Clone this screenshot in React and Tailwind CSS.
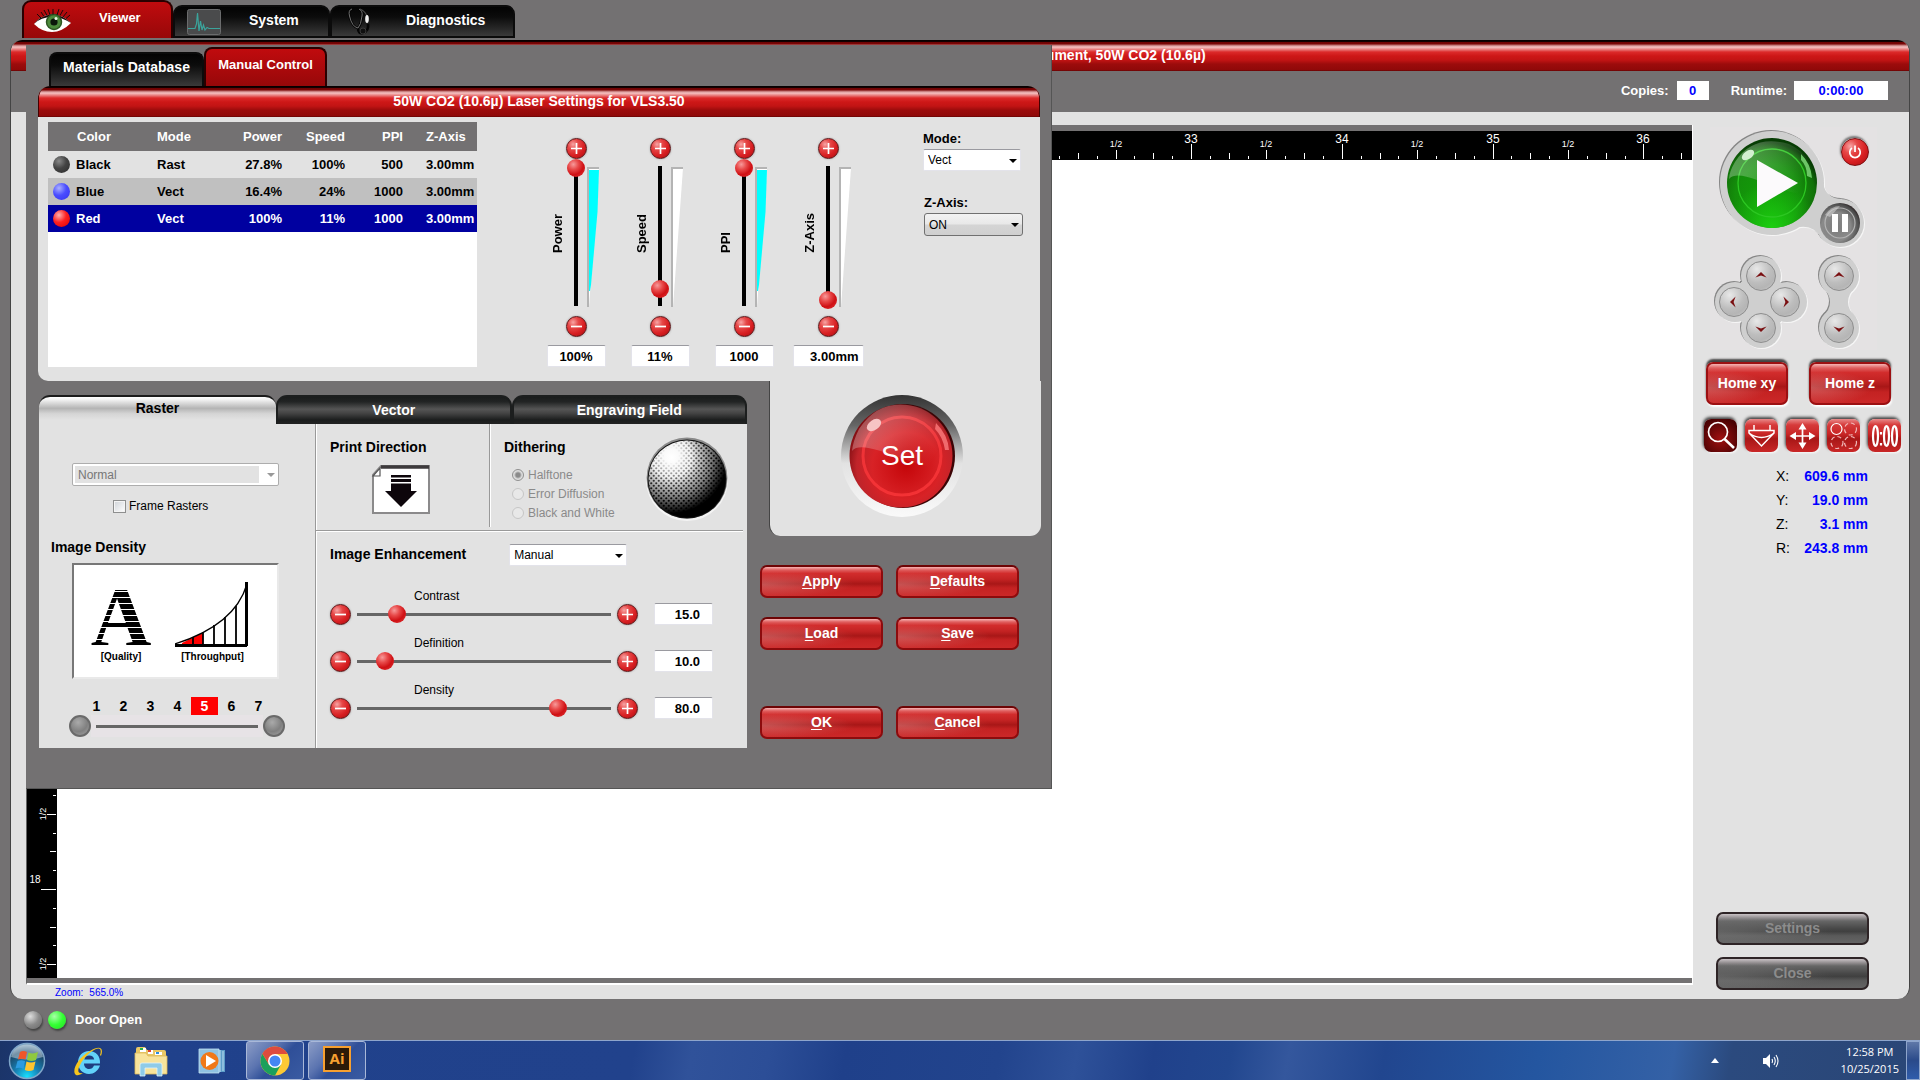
import React from "react";

const SANS = "font-['Liberation_Sans',Arial,sans-serif]";

const titleBar =
  "flex items-center justify-center text-white font-bold bg-[linear-gradient(180deg,#000_0px,#1a0000_2px,#6b0303_2px,#7c0606_4px,#b86a6a_5px,#f6c3c3_7px,#ea8a8a_9px,#dc2a2a_12px,#cd1717_16px,#c21414_20px,#9c0c0c_24px,#8f0909_30px,#5a0202_31px)]";

const glossRed =
  "bg-[radial-gradient(ellipse_at_0%_60%,rgba(225,140,140,0.5),transparent_55%),linear-gradient(180deg,#f6b4b4_0%,#e06060_10%,#d22c2c_22%,#c32323_42%,#a81717_58%,#c42222_72%,#cb2828_100%)]";

const glossGray =
  "bg-[radial-gradient(ellipse_at_0%_60%,rgba(150,150,150,0.4),transparent_55%),linear-gradient(180deg,#c9c2c5_0%,#8f8b8d_14%,#666_24%,#484848_50%,#404040_60%,#5a5a5a_75%,#646464_100%)]";

const ballRed = "bg-[radial-gradient(circle_at_32%_28%,#f7a5a5_0%,#e64848_28%,#d81f22_60%,#a50d10_100%)]";

const thumb =
  "[&::-webkit-slider-thumb]:appearance-none [&::-webkit-slider-thumb]:size-[18px] [&::-webkit-slider-thumb]:rounded-full [&::-webkit-slider-thumb]:bg-[radial-gradient(circle_at_35%_30%,#f79a9a_0%,#e84a4a_30%,#cf1014_60%,#e23c3c_100%)]";

function MainTab({ label, icon, active, className }) {
  return (
    <button
      className={
        active
          ? `flex h-[38px] items-center rounded-t-[9px] border-2 border-b-0 border-[#2a0000] bg-[linear-gradient(180deg,#c00b0e,#970809)] pb-[4px] text-[13px] font-bold text-white ${className}`
          : `mt-[5px] flex h-[33px] items-center rounded-t-[9px] border-2 border-[#0b0b0b] bg-[linear-gradient(180deg,#030303_0%,#0c0c0c_35%,#3a3a3a_100%)] pb-[2px] text-[14px] font-bold text-white ${className}`
      }
    >
      {icon}
      {label}
    </button>
  );
}

function EyeIcon() {
  return (
    <svg width="40" height="26" viewBox="0 0 40 26" className="mt-[5px] mr-[27px] ml-[8px]" aria-hidden="true">
      <path d="M2 16 Q8 8 20 6 Q31 7 39 15 Q30 24 20 24 Q10 24 2 16Z" fill="#fff" />
      <path d="M2 16 Q8 8 20 6 Q31 7 39 15 Q30 9 20 9 Q9 9 2 16Z" fill="#1b0a0a" />
      <circle cx="22" cy="14" r="7.500" fill="#4c8a3b" />
      <circle cx="22" cy="14" r="7.500" fill="none" stroke="#2e5723" strokeWidth="1.5" />
      <circle cx="22" cy="14" r="3.6" fill="#0b160a" />
      <circle cx="24" cy="10.5" r="1.5" fill="#e9f5e4" />
      <path d="M9 10 5 6M12 8.5 9 4M15 7.5 12 2M18 7 16 1M21 6.5 21 1M25 7 27 1M28 7.5 31 2M31 9 35 4M34 10.5 38 7" stroke="#1b0a0a" strokeWidth="1" />
    </svg>
  );
}

function PulseIcon() {
  return (
    <svg width="34" height="26" viewBox="0 0 34 26" className="mt-[2px] mr-[28px] ml-[12px]" aria-hidden="true">
      <rect x="0.5" y="0.5" width="33" height="25" rx="2" fill="#4a4b4c" stroke="#6b6c6d" />
      <path d="M1 19.500H8L9.500 15 10.500 4 12 22 13.500 12 15 21 16.500 16 18 21 20 18.500 22 19.500H33" fill="none" stroke="#3ba39b" strokeWidth="1.2" />
    </svg>
  );
}

function StethoscopeIcon() {
  return (
    <svg width="24" height="28" viewBox="0 0 24 28" className="mr-[35px] ml-[15px]" aria-hidden="true">
      <path d="M5 2 Q1 3 2.500 9 Q5 20 11 21 Q14 18 15 9 Q16 4 12 2 M11 21 Q11 27 16 26 Q22 24 21 17" fill="none" stroke="#050505" strokeWidth="2.6" />
      <path d="M5 2 Q1 3 2.500 9 Q5 20 11 21 Q14 18 15 9 Q16 4 12 2" fill="none" stroke="#707070" strokeWidth="1" />
      <path d="M13 2 Q18 4 20 9" fill="none" stroke="#4a4a4a" strokeWidth="1.2" />
      <ellipse cx="20" cy="12" rx="1.8" ry="4" fill="#f0f0f0" />
      <circle cx="16" cy="24" r="3" fill="#101010" stroke="#3a3a3a" />
    </svg>
  );
}

function RoundButton({ sign, label }) {
  return (
    <button
      aria-label={label}
      className={`flex size-[21px] shrink-0 items-center justify-center rounded-full border border-[#5c1416] shadow-[0_0_2px_#999] ${ballRed}`}
    >
      <svg width="11" height="11" viewBox="0 0 11 11" aria-hidden="true">
        <path d={sign === "+" ? "M0 5.500H11M5.500 0V11" : "M0 5.500H11"} stroke="#fff" strokeWidth="1.700" />
      </svg>
    </button>
  );
}

const rows = [
  { name: "Black", mode: "Rast", power: "27.8%", speed: "100%", ppi: "500", z: "3.00mm", row: "bg-[#e2e2e2]", ball: "bg-[radial-gradient(circle_at_35%_30%,#888,#444_45%,#2b2b2b)]" },
  { name: "Blue", mode: "Vect", power: "16.4%", speed: "24%", ppi: "1000", z: "3.00mm", row: "bg-[#c0c0c0]", ball: "bg-[radial-gradient(circle_at_35%_30%,#aab0ff,#4a4dff_45%,#3333ee)]" },
  { name: "Red", mode: "Vect", power: "100%", speed: "11%", ppi: "1000", z: "3.00mm", row: "bg-[#0000a0] text-white", ball: "bg-[radial-gradient(circle_at_35%_30%,#ffb0b0,#ff2020_45%,#dd0000)]" },
];

function SettingsTable() {
  return (
    <div className="mt-[5px] ml-[10px] h-[245px] w-[429px] bg-white">
      <table className="w-full table-fixed border-collapse text-left text-[13px] leading-[16px] font-bold">
        <colgroup>
          <col className="w-[109px]" />
          <col className="w-[60px]" />
          <col className="w-[65px]" />
          <col className="w-[63px]" />
          <col className="w-[58px]" />
          <col className="w-[74px]" />
        </colgroup>
        <thead>
          <tr className="h-[29px] bg-[#737172] text-white">
            <th className="p-0 pl-[29px]">Color</th>
            <th className="p-0">Mode</th>
            <th className="p-0 text-right">Power</th>
            <th className="p-0 text-right">Speed</th>
            <th className="p-0 text-right">PPI</th>
            <th className="p-0 pl-[23px]">Z-Axis</th>
          </tr>
        </thead>
        <tbody>
          {rows.map((r) => (
            <tr key={r.name} className={`h-[27px] ${r.row}`}>
              <td className="p-0">
                <div className="flex items-center gap-[6px] pl-[5px]">
                  <span className={`size-[17px] rounded-full ${r.ball}`} />
                  {r.name}
                </div>
              </td>
              <td className="p-0">{r.mode}</td>
              <td className="p-0 text-right">{r.power}</td>
              <td className="p-0 text-right">{r.speed}</td>
              <td className="p-0 text-right">{r.ppi}</td>
              <td className="p-0 pl-[23px] whitespace-nowrap">{r.z}</td>
            </tr>
          ))}
        </tbody>
      </table>
    </div>
  );
}

function Wedge({ filled }) {
  return (
    <svg width="14" height="140" viewBox="0 0 14 140" className="mt-[8px] ml-[2px] self-start" aria-hidden="true">
      <path d="M1 1H12L2 140H1Z" fill="#fff" />
      <path d="M1 140V1H12" fill="none" stroke="#b4b4b4" strokeWidth="2" />
      {filled && <path d="M2 3H12L10.500 45 4 118 3 124H2Z" fill="#00ffff" />}
    </svg>
  );
}

function VerticalSlider({ label, value, pos, filled, wide }) {
  const id = `v-${label}`;
  return (
    <div className="flex w-[58px] flex-col items-center">
      <RoundButton sign="+" label={`Increase ${label}`} />
      <div className="grid h-[154px] w-full grid-cols-[20px_18px_20px]">
        <label htmlFor={id} className="mb-[60px] ml-[3px] rotate-180 self-end text-[13px] leading-[16px] font-bold [writing-mode:vertical-rl]">
          {label}
        </label>
        <input
          id={id}
          type="range"
          defaultValue={pos}
          className={`h-[154px] w-[18px] appearance-none bg-transparent bg-[linear-gradient(#000,#000)] bg-[length:4px_140px] bg-center bg-no-repeat [direction:rtl] [writing-mode:vertical-lr] ${thumb}`}
        />
        <Wedge filled={filled} />
      </div>
      <div className="mt-[3px]">
        <RoundButton sign="-" label={`Decrease ${label}`} />
      </div>
      <input
        aria-label={`${label} value`}
        defaultValue={value}
        className={`mt-[8px] h-[22px] rounded-[2px] border border-[#e3e3ea] border-t-[#9a9aa0] bg-white text-[13px] font-bold ${wide ? "w-[71px] pr-[4px] text-right" : "w-[59px] text-center"}`}
      />
    </div>
  );
}

function Select({ id, label, options, className, arrow, disabled }) {
  return (
    <div className="relative w-fit">
      <select id={id} aria-label={label} disabled={disabled} className={`block appearance-none text-[12px] ${className}`}>
        {options.map((o) => (
          <option key={o}>{o}</option>
        ))}
      </select>
      <svg width="8" height="4" viewBox="0 0 8 4" className={`pointer-events-none absolute top-[10px] right-[4px] ${arrow}`} aria-hidden="true">
        <path d="M0 0H8L4 4Z" fill="currentColor" />
      </svg>
    </div>
  );
}

function BlackTab({ label }) {
  return (
    <button className="flex-1 rounded-t-[11px] border-2 border-b-0 border-[#1c1e1e] bg-[linear-gradient(180deg,#1a1c1c_0%,#222424_18%,#555_45%,#444_60%,#1b1d1d_85%,#222_100%)] pb-[1px] text-[14px] font-bold text-white">
      {label}
    </button>
  );
}

function PreviewPicture() {
  return (
    <div className="mt-[6px] ml-[33px] flex h-[116px] w-[207px] items-start gap-[6px] border-2 border-[#e9e9e9] border-t-[#777] border-l-[#777] bg-white pl-[17px] text-center text-[10px] leading-[12px] font-bold">
      <figure className="mt-[19px] w-[60px]">
        <svg width="60" height="66" viewBox="0 0 60 66" className="overflow-visible" aria-hidden="true">
          <defs>
            <pattern id="stripes" width="60" height="6" y="2" patternUnits="userSpaceOnUse">
              <rect width="60" height="5" fill="#000" />
            </pattern>
          </defs>
          <text x="30" y="62" textAnchor="middle" fontSize="84" fontWeight="bold" fontFamily="'Liberation Serif', serif" fill="url(#stripes)">A</text>
        </svg>
        <figcaption className="mt-[1px]">[Quality]</figcaption>
      </figure>
      <figure className="mt-[15px] ml-[18px] w-[75px]">
        <svg width="75" height="68" viewBox="0 0 75 68" aria-hidden="true">
          <path d="M7 63 17 58 28 53V64H7Z" fill="#f00" />
          <path d="M0 64Q60 45 72 4" fill="none" stroke="#000" strokeWidth="1.300" />
          <path d="M18 57V64M28 52V64M39 45V64M50 37V64M61 26V64" stroke="#000" strokeWidth="1.800" />
          <path d="M0 65.500H72" stroke="#000" strokeWidth="3" />
          <path d="M71.500 2V66" stroke="#000" strokeWidth="3" />
        </svg>
        <figcaption className="mt-[3px]">[Throughput]</figcaption>
      </figure>
    </div>
  );
}

function DitherSphere() {
  return (
    <svg width="84" height="84" viewBox="0 0 84 84" aria-hidden="true">
      <defs>
        <radialGradient id="sph" cx="0.3" cy="0.22" r="0.85">
          <stop offset="0" stopColor="#fff" />
          <stop offset="0.3" stopColor="#f2f2f2" />
          <stop offset="0.62" stopColor="#777" />
          <stop offset="0.85" stopColor="#000" />
        </radialGradient>
        <radialGradient id="dotfade" cx="0.3" cy="0.2" r="0.9">
          <stop offset="0.1" stopColor="#fff" stopOpacity="0" />
          <stop offset="0.4" stopColor="#fff" stopOpacity="0.700" />
          <stop offset="0.7" stopColor="#fff" stopOpacity="1" />
        </radialGradient>
        <pattern id="dots" width="5" height="5" patternUnits="userSpaceOnUse">
          <circle cx="1.250" cy="1.250" r="1.100" fill="#000" />
          <circle cx="3.750" cy="3.750" r="1.100" fill="#000" />
        </pattern>
        <mask id="dm">
          <circle cx="42" cy="42" r="39" fill="url(#dotfade)" />
        </mask>
      </defs>
      <circle cx="42" cy="43" r="41" fill="#f4f4f4" />
      <circle cx="42" cy="41" r="40.500" fill="#8a8a8a" />
      <circle cx="42" cy="42" r="39.500" fill="#111" />
      <circle cx="42" cy="42" r="38.500" fill="url(#sph)" />
      <circle cx="42" cy="42" r="38.500" fill="url(#dots)" mask="url(#dm)" />
    </svg>
  );
}

function PageDownIcon() {
  return (
    <svg width="60" height="50" viewBox="0 0 60 50" aria-hidden="true">
      <path d="M10 1H58V48H2V10Z" fill="#fff" stroke="#8b8a8b" strokeWidth="2" />
      <path d="M10 2H58" stroke="#3d3a3c" strokeWidth="3.500" />
      <path d="M2 11 9 3V11Z" fill="#fff" stroke="#555" strokeWidth="1.200" />
      <path d="M20 10H40V12.500H20ZM20 14H40V17H20ZM20 18.500H40V26H46L30 42 14 26H20Z" fill="#0d060b" />
    </svg>
  );
}

function HorizontalSlider({ label, value, pos }) {
  const id = `h-${label}`;
  return (
    <div className="flex h-[47px] flex-col">
      <label htmlFor={id} className="ml-[84px] text-[12px] leading-[16px]">
        {label}
      </label>
      <div className="flex h-[20px] items-center">
        <RoundButton sign="-" label={`Decrease ${label}`} />
        <input
          id={id}
          type="range"
          defaultValue={pos}
          className={`h-[18px] w-[266px] appearance-none bg-transparent bg-[linear-gradient(#666,#666)] bg-[length:254px_3px] bg-center bg-no-repeat ${thumb}`}
        />
        <RoundButton sign="+" label={`Increase ${label}`} />
        <input
          aria-label={`${label} value`}
          defaultValue={value}
          className="ml-[16px] h-[22px] w-[59px] rounded-[2px] border border-[#e3e3ea] border-t-[#9a9aa0] bg-white pr-[12px] text-right text-[13px] font-bold"
        />
      </div>
    </div>
  );
}

function RasterPanel() {
  return (
    <section className="mt-[14px] w-[708px]">
      <div className="flex h-[29px]">
        <button className="w-[237px] rounded-t-[11px] border-t-2 border-[#1b1b1b] bg-[linear-gradient(180deg,#fff_0%,#f2f2f2_10%,#b4b4b4_42%,#d5d5d5_62%,#e2e2e2_85%)] pb-[5px] text-[14px] font-bold">
          Raster
        </button>
        <BlackTab label="Vector" />
        <BlackTab label="Engraving Field" />
      </div>
      <div className="grid grid-cols-[276px_1fr] bg-[#e2e2e2]">
        <div className="h-[324px]">
          <div className="mt-[39px] ml-[33px]">
            <Select
              id="raster-mode"
              label="Raster mode"
              disabled
              options={["Normal"]}
              arrow="text-[#999]"
              className="h-[23px] w-[207px] rounded-[2px] border border-[#adadad] bg-white bg-[linear-gradient(#e2e2e2,#e2e2e2)] bg-[length:184px_17px] bg-[position:2px_2px] bg-no-repeat pl-[5px] text-[#777] opacity-100"
            />
          </div>
          <label className="mt-[12px] ml-[74px] flex items-center gap-[3px] text-[12px] leading-[16px]">
            <input type="checkbox" className="size-[13px] appearance-none border border-[#8e8f8f] bg-[linear-gradient(135deg,#cfd3d8,#fff)] shadow-[inset_0_0_0_1px_#f4f4f4]" />
            Frame Rasters
          </label>
          <h3 className="mt-[23px] ml-[12px] text-[14px] leading-[20px] font-bold">Image Density</h3>
          <PreviewPicture />
          <div className="mt-[18px] ml-[44px] grid w-[189px] grid-cols-7 text-center text-[14px] leading-[18px] font-bold">
            {[1, 2, 3, 4, 5, 6, 7].map((n) => (
              <span key={n} className={n === 5 ? "bg-[#f00] text-white" : ""}>
                {n}
              </span>
            ))}
          </div>
          <div className="ml-[30px] flex items-center">
            <button aria-label="Lower density" className="size-[22px] rounded-full border-2 border-[#6a6a6a] bg-[radial-gradient(circle_at_40%_30%,#aaa,#808080_55%,#a5a5a5)]" />
            <input
              type="range"
              aria-label="Image Density"
              min="1"
              max="7"
              defaultValue="5"
              className="h-[22px] w-[172px] appearance-none bg-[#e7e3e6] bg-[linear-gradient(#666,#666)] bg-[length:162px_3px] bg-center bg-no-repeat [&::-webkit-slider-thumb]:size-[1px] [&::-webkit-slider-thumb]:appearance-none"
            />
            <button aria-label="Raise density" className="size-[22px] rounded-full border-2 border-[#6a6a6a] bg-[radial-gradient(circle_at_40%_30%,#aaa,#808080_55%,#a5a5a5)]" />
          </div>
        </div>
        <div className="border-l border-[#999] shadow-[inset_1px_0_0_#fff]">
          <div className="mr-[4px] flex h-[107px] border-b border-[#999] shadow-[0_1px_0_#fff]">
            <div className="mb-[3px] w-[174px] border-r border-[#999] pt-[13px] pl-[14px] shadow-[1px_0_0_#fff]">
              <h3 className="text-[14px] leading-[20px] font-bold">Print Direction</h3>
              <button aria-label="Print direction down" className="mt-[8px] ml-[41px] block">
                <PageDownIcon />
              </button>
            </div>
            <div className="flex flex-1 justify-between pt-[13px] pl-[14px]">
              <fieldset disabled className="text-[12px] leading-[18px] text-[#8a8a8a]">
                <legend className="mb-[8px] text-[14px] leading-[20px] font-bold text-black">Dithering</legend>
                {["Halftone", "Error Diffusion", "Black and White"].map((d, i) => (
                  <label key={d} className="ml-[8px] flex h-[19px] items-center gap-[4px]">
                    <input
                      type="radio"
                      name="dither"
                      defaultChecked={i === 0}
                      className="size-[12px] appearance-none rounded-full border border-[#c6c6c6] bg-[#e8e8e8] checked:border-[#8f8f8f] checked:bg-[radial-gradient(circle,#8a8a8a_0_2px,#ddd_4px)]"
                    />
                    {d}
                  </label>
                ))}
              </fieldset>
              <div className="mr-[14px]">
                <DitherSphere />
              </div>
            </div>
          </div>
          <div className="pt-[13px] pl-[14px]">
            <div className="flex gap-[43px]">
              <label htmlFor="enh" className="text-[14px] leading-[20px] font-bold">
                Image Enhancement
              </label>
              <Select
                id="enh"
                options={["Manual"]}
                arrow="text-black"
                className="h-[22px] w-[118px] rounded-[2px] border border-[#e3e3ea] border-t-[#9a9aa0] bg-white pl-[4px]"
              />
            </div>
            <div className="mt-[22px]">
              <HorizontalSlider label="Contrast" value="15.0" pos={15} />
              <HorizontalSlider label="Definition" value="10.0" pos={10} />
              <HorizontalSlider label="Density" value="80.0" pos={80} />
            </div>
          </div>
        </div>
      </div>
    </section>
  );
}

function DialogButton({ label }) {
  return (
    <button className={`h-[33px] rounded-[7px] border-2 border-[#8c0b0d] border-t-[#6d0405] text-[14px] font-bold text-white ${glossRed}`}>
      <u className="underline underline-offset-2">{label[0]}</u>
      {label.slice(1)}
    </button>
  );
}

function SetButton() {
  return (
    <button className="relative mt-[14px] ml-[71px] block size-[122px]">
      <svg width="122" height="122" viewBox="0 0 122 122" className="block" aria-hidden="true">
        <defs>
          <linearGradient id="ring" x1="0" y1="0" x2="0" y2="1">
            <stop offset="0" stopColor="#333" />
            <stop offset="0.25" stopColor="#666" />
            <stop offset="0.5" stopColor="#ccc" />
            <stop offset="0.56" stopColor="#e2e2e2" />
            <stop offset="1" stopColor="#fafafa" />
          </linearGradient>
          <radialGradient id="setg" cx="0.55" cy="0.6" r="0.6">
            <stop offset="0" stopColor="#c5060a" />
            <stop offset="0.55" stopColor="#d82226" />
            <stop offset="0.8" stopColor="#c0242a" />
            <stop offset="1" stopColor="#7c0c10" />
          </radialGradient>
          <linearGradient id="gl" x1="0" y1="0" x2="1" y2="0.4">
            <stop offset="0" stopColor="#fff" stopOpacity="0.350" />
            <stop offset="1" stopColor="#fff" stopOpacity="0" />
          </linearGradient>
        </defs>
        <circle cx="61" cy="61" r="61" fill="url(#ring)" />
        <circle cx="62" cy="61" r="52" fill="#3c0405" />
        <circle cx="60" cy="61" r="51.500" fill="url(#setg)" />
        <circle cx="61" cy="61" r="39" fill="none" stroke="#ff3a3d" strokeOpacity="0.700" strokeWidth="3" />
        <path d="M11 56C22 42 70 72 108 76Q114 28 80 13Q40 0 18 34Q12 46 11 56Z" fill="url(#gl)" />
        <ellipse cx="33" cy="30" rx="8" ry="5" transform="rotate(-35 33 30)" fill="#f6c4c4" />
        <path d="M95 28Q107 40 108 55L104 55Q102 42 94 34Z" fill="#f06a6c" />
      </svg>
      <span className="absolute inset-0 flex items-center justify-center text-[28px] text-white">Set</span>
    </button>
  );
}

function LaserDialog() {
  return (
    <section role="dialog" aria-label="Laser settings" className="absolute top-[45px] left-[26px] w-[1026px] border-r border-b border-[#555] bg-[#737172] pb-[40px]">
      <div className="flex h-[41px] items-end pl-[23px] font-bold text-white">
        <button className="h-[34px] w-[155px] rounded-t-[8px] border-2 border-b-0 border-[#0b0b0b] bg-[linear-gradient(180deg,#030303_0%,#0c0c0c_35%,#3a3a3a_100%)] pb-[6px] text-[14px]">
          Materials Database
        </button>
        <button className="h-[39px] w-[123px] rounded-t-[8px] border-2 border-b-0 border-[#2a0000] bg-[linear-gradient(180deg,#c00b0e,#970809)] pb-[6px] text-[13px]">
          Manual Control
        </button>
      </div>
      <div className="mr-[11px] ml-[12px] rounded-t-[12px] rounded-bl-[10px] bg-[#e2e2e2]">
        <h2 className={`h-[31px] rounded-t-[12px] border-x border-[#400] text-[14px] ${titleBar}`}>50W CO2 (10.6µ) Laser Settings for VLS3.50</h2>
        <div className="flex h-[264px]">
          <SettingsTable />
          <div className="mt-[21px] ml-[70px] flex gap-[26px]">
            <VerticalSlider label="Power" value="100%" pos={100} filled />
            <VerticalSlider label="Speed" value="11%" pos={11} />
            <VerticalSlider label="PPI" value="1000" pos={100} filled />
            <VerticalSlider label="Z-Axis" value="3.00mm" pos={3} wide />
          </div>
          <div className="mt-[12px] ml-[66px]">
            <label htmlFor="mode" className="block text-[13px] leading-[20px] font-bold">
              Mode:
            </label>
            <Select
              id="mode"
              options={["Vect"]}
              arrow="text-black"
              className="h-[22px] w-[98px] rounded-[2px] border border-[#e3e3ea] border-t-[#9a9aa0] bg-white pl-[4px]"
            />
            <label htmlFor="zaxis" className="mt-[22px] ml-[1px] block text-[13px] leading-[20px] font-bold">
              Z-Axis:
            </label>
            <div className="ml-[1px]">
              <Select
                id="zaxis"
                options={["ON"]}
                arrow="text-black"
                className="h-[23px] w-[99px] rounded-[3px] border border-[#707070] bg-[linear-gradient(180deg,#f2f2f2_0%,#e8e8e8_48%,#d4d4d4_52%,#cfcfcf_100%)] pl-[4px]"
              />
            </div>
          </div>
        </div>
      </div>
      <div className="flex pl-[13px]">
        <RasterPanel />
        <div className="ml-[13px]">
          <div className="ml-[9px] h-[155px] w-[272px] overflow-hidden rounded-b-[11px] border-l border-[#444] bg-[#e2e2e2]">
            <SetButton />
          </div>
          <div className="mt-[29px] grid w-[259px] grid-cols-2 gap-x-[13px] gap-y-[19px]">
            <DialogButton label="Apply" />
            <DialogButton label="Defaults" />
            <DialogButton label="Load" />
            <DialogButton label="Save" />
          </div>
          <div className="mt-[56px] grid w-[259px] grid-cols-2 gap-x-[13px]">
            <DialogButton label="OK" />
            <DialogButton label="Cancel" />
          </div>
        </div>
      </div>
    </section>
  );
}

const tickLen = (i) => (i % 8 === 0 ? 15 : i % 4 === 0 ? 9 : i % 2 === 0 ? 6 : 3);
const hTicks = Array.from({ length: 160 }, (_, k) => k + 208);
const vTicks = Array.from({ length: 44 }, (_, k) => k + 108);

function TopRuler() {
  return (
    <svg height="29" className={`block w-full bg-black ${SANS}`} aria-hidden="true">
      {hTicks.map((i) => {
        const x = Math.round(1164 + (i - 264) * 18.85);
        return (
          <g key={i}>
            <rect x={x} y={28 - tickLen(i)} width="1" height={tickLen(i)} fill="#fff" />
            {i % 8 === 0 && <text x={x} y="12" fontSize="12" fill="#fff" textAnchor="middle">{i / 8}</text>}
            {i % 8 === 4 && <text x={x} y="16" fontSize="9" fill="#fff" textAnchor="middle">1/2</text>}
          </g>
        );
      })}
    </svg>
  );
}

function SideRuler() {
  return (
    <svg width="30" className={`block h-full bg-black ${SANS}`} aria-hidden="true">
      {vTicks.map((i) => {
        const y = Math.round(729 + (i - 144) * 18.8);
        return (
          <g key={i}>
            <rect x={29 - tickLen(i)} y={y} width={tickLen(i)} height="1" fill="#fff" />
            {i % 8 === 0 && <text x="8" y={y - 6} fontSize="10" fill="#fff" textAnchor="middle">{i / 8}</text>}
            {i % 8 === 4 && <text x="19" y={y} transform={`rotate(-90 19 ${y})`} fontSize="9" fill="#fff" textAnchor="middle">1/2</text>}
          </g>
        );
      })}
    </svg>
  );
}

function Workspace() {
  return (
    <div className="flex min-w-0 flex-1 flex-col pt-[13px] pl-[15px]">
      <div className="flex flex-1 flex-col border-r border-b-2 border-l border-white border-l-[#666] bg-[#737172] pt-[6px] pb-[5px]">
        <TopRuler />
        <div className="flex flex-1 bg-white">
          <div className="w-[30px] border-r border-[#777]">
            <SideRuler />
          </div>
        </div>
      </div>
      <p className="flex h-[14px] items-center gap-[6px] pl-[29px] text-[10px] text-[#00f]">
        <span>Zoom:</span>
        <span>565.0%</span>
      </p>
    </div>
  );
}

const arrowPaths = {
  up: "M3 12 10 5 17 12 10 9.500Z",
  down: "M3 8 10 15 17 8 10 10.500Z",
  left: "M12 3 5 10 12 17 9.500 10Z",
  right: "M8 3 15 10 8 17 10.500 10Z",
};

function JogButton({ dir, label, className }) {
  return (
    <button
      aria-label={label}
      className={`absolute flex size-[30px] items-center justify-center rounded-full border border-[#8d8d8d] bg-[radial-gradient(circle_at_35%_25%,#e8e8e8,#bdbdbd_50%,#b5b5b5_70%,#cfcfcf)] ${className}`}
    >
      <svg width="16" height="16" viewBox="0 0 20 20" aria-hidden="true">
        <path d={arrowPaths[dir]} fill="#7a1012" />
      </svg>
    </button>
  );
}

function HousingShapes() {
  return (
    <>
      <circle cx="62" cy="56" r="52" />
      <circle cx="130" cy="96" r="24" />
      <path d="M107 30 113 56Q116 72 132 72L112 112Q104 98 90 100L70 80Z" />
      <circle cx="51" cy="149" r="20" />
      <circle cx="25" cy="175" r="20" />
      <circle cx="77" cy="175" r="20" />
      <circle cx="51" cy="201" r="20" />
      <rect x="31" y="155" width="40" height="40" />
      <circle cx="129" cy="149" r="20" />
      <circle cx="129" cy="201" r="20" />
      <path d="M112 159Q128 175 112 191H146Q130 175 146 159Z" />
    </>
  );
}

function ControlCluster() {
  return (
    <div className="relative mt-[15px] ml-[17px] h-[223px] w-[167px] bg-[#e4e2e3]">
      <svg width="172" height="226" viewBox="0 0 172 226" className="block" aria-hidden="true">
        <g fill="#858585" transform="translate(-1 -1)"><HousingShapes /></g>
        <g fill="#f6f6f6" transform="translate(1 1)"><HousingShapes /></g>
        <g fill="#cfcfcf"><HousingShapes /></g>
      </svg>
      <button aria-label="Start" className="absolute top-[11px] left-[17px] size-[90px]">
        <svg width="90" height="90" viewBox="0 0 90 90" aria-hidden="true">
          <defs>
            <radialGradient id="gg" cx="0.45" cy="0.65" r="0.6">
              <stop offset="0" stopColor="#12a008" />
              <stop offset="0.6" stopColor="#148f0b" />
              <stop offset="0.88" stopColor="#117009" />
              <stop offset="1" stopColor="#073d04" />
            </radialGradient>
            <radialGradient id="gb" cx="0.5" cy="1" r="0.5">
              <stop offset="0" stopColor="#1cd010" />
              <stop offset="1" stopColor="#1cd010" stopOpacity="0" />
            </radialGradient>
            <linearGradient id="gw" x1="0" y1="0" x2="1" y2="0.3">
              <stop offset="0" stopColor="#fff" stopOpacity="0.350" />
              <stop offset="1" stopColor="#fff" stopOpacity="0" />
            </linearGradient>
          </defs>
          <circle cx="45" cy="45" r="45" fill="url(#gg)" />
          <circle cx="45" cy="45" r="45" fill="url(#gb)" />
          <circle cx="45" cy="45" r="34" fill="none" stroke="#2cc722" strokeWidth="1.300" />
          <path d="M2 41C14 28 50 56 88 58Q92 20 62 6Q26 -4 8 24Q2 34 2 41Z" fill="url(#gw)" />
          <ellipse cx="21" cy="17" rx="7" ry="4" transform="rotate(-35 21 17)" fill="#d3efd0" />
          <path d="M74 16Q84 26 85 40L80 38Q80 28 74 22Z" fill="#6cc566" />
          <path d="M30 22 71 45 30 69Z" fill="#fcfafc" />
        </svg>
      </button>
      <button aria-label="Pause" className="absolute top-[76px] left-[110px] size-[40px]">
        <svg width="40" height="40" viewBox="0 0 40 40" aria-hidden="true">
          <defs>
            <radialGradient id="pg" cx="0.4" cy="0.6" r="0.65">
              <stop offset="0" stopColor="#7c7c7c" />
              <stop offset="0.55" stopColor="#8a8a8a" />
              <stop offset="0.9" stopColor="#4a4a4a" />
              <stop offset="1" stopColor="#2c2022" />
            </radialGradient>
          </defs>
          <circle cx="20" cy="20" r="20" fill="url(#pg)" />
          <circle cx="20" cy="20" r="15" fill="none" stroke="#b4b4b4" strokeWidth="1.200" />
          <path d="M5 12Q11 3 20 3L10 14Z" fill="#cfcfcf" opacity="0.600" />
          <path d="M12 11H18V29H12ZM22 11H28V29H22Z" fill="#fff" />
        </svg>
      </button>
      <button aria-label="Power" className={`absolute top-[11px] left-[131px] flex size-[28px] items-center justify-center rounded-full border border-[#7e0d10] shadow-[-1px_-2px_2px_#777] ${ballRed}`}>
        <svg width="14" height="14" viewBox="0 0 16 16" aria-hidden="true">
          <path d="M4.500 3.500A6 6 0 1 0 11.500 3.500M8 0.500V8" fill="none" stroke="#fff" strokeWidth="2" />
        </svg>
      </button>
      <JogButton dir="up" label="Move up" className="top-[134px] left-[36px]" />
      <JogButton dir="left" label="Move left" className="top-[160px] left-[9px]" />
      <JogButton dir="right" label="Move right" className="top-[160px] left-[60px]" />
      <JogButton dir="down" label="Move down" className="top-[186px] left-[36px]" />
      <JogButton dir="up" label="Raise table" className="top-[134px] left-[114px]" />
      <JogButton dir="down" label="Lower table" className="top-[186px] left-[114px]" />
    </div>
  );
}

const tools = [
  {
    label: "Zoom",
    active: true,
    art: (
      <g fill="none" stroke="#fff" strokeWidth="1.700">
        <circle cx="14" cy="13" r="9.500" />
        <path d="M20.500 20 30 29" strokeWidth="2.500" />
      </g>
    ),
  },
  {
    label: "Focus view",
    art: <path d="M9 6V11M25 6V11M4 11.500H29V14L16.500 27 4 14ZM4 14Q16.500 23 29 14" fill="none" stroke="#fff" strokeWidth="1.500" />,
  },
  {
    label: "Relocate",
    art: (
      <>
        <path d="M16.500 6V28M6 17H27" stroke="#fff" strokeWidth="1.700" />
        <path d="M16.500 4 20.500 10.500H12.500ZM16.500 30 20.500 23.500H12.500ZM3.500 17 10 13V21ZM29.500 17 23 13V21Z" fill="#fff" />
      </>
    ),
  },
  {
    label: "Duplicate",
    art: (
      <g fill="none" stroke="#fff" strokeWidth="1.200">
        <circle cx="9.500" cy="10" r="5.500" />
        <g stroke="#f0b8b8" strokeDasharray="4 3">
          <circle cx="23.500" cy="10" r="6" />
          <circle cx="10" cy="23.500" r="6" />
          <circle cx="23.500" cy="23.500" r="6" />
        </g>
      </g>
    ),
  },
  {
    label: "Estimate",
    art: (
      <g fill="none" stroke="#fff" strokeWidth="2.200">
        <ellipse cx="7.500" cy="17" rx="2.500" ry="10" />
        <ellipse cx="18.500" cy="17" rx="2.500" ry="10" />
        <ellipse cx="26.500" cy="17" rx="2.500" ry="10" />
        <path d="M13 13V15.500M13 24V26.500" />
      </g>
    ),
  },
];

const coords = [
  ["X:", "609.6 mm"],
  ["Y:", "19.0 mm"],
  ["Z:", "3.1 mm"],
  ["R:", "243.8 mm"],
];

function ControlPanel() {
  return (
    <aside className="flex w-[216px] shrink-0 flex-col pb-[9px]">
      <ControlCluster />
      <div className="mt-[12px] ml-[13px] flex gap-[21px]">
        {["Home xy", "Home z"].map((t) => (
          <button key={t} className={`h-[43px] w-[82px] rounded-[7px] border-2 border-[#9c1012] text-[14px] font-bold text-white shadow-[0_-3px_2px_#444,1px_2px_2px_#fff] ${glossRed}`}>
            {t}
          </button>
        ))}
      </div>
      <div className="mt-[14px] ml-[11px] flex gap-[8px]">
        {tools.map((t) => (
          <button
            key={t.label}
            aria-label={t.label}
            className={`size-[33px] rounded-[7px] shadow-[-1px_-2px_3px_#444,1px_1px_2px_#fff] ${t.active ? "bg-[radial-gradient(circle_at_50%_60%,#a01010,#4a0203_80%)]" : "bg-[linear-gradient(180deg,#e98a8a_0%,#d63a3a_18%,#c92626_45%,#a81717_60%,#c92727_100%)]"}`}
          >
            <svg width="33" height="33" viewBox="0 0 33 33" aria-hidden="true">{t.art}</svg>
          </button>
        ))}
      </div>
      <dl className="mt-[12px] ml-[83px] grid w-[92px] grid-cols-[auto_1fr] text-[14px] leading-[24px]">
        {coords.map(([k, v]) => (
          <React.Fragment key={k}>
            <dt>{k}</dt>
            <dd className="text-right font-bold text-[#00f]">{v}</dd>
          </React.Fragment>
        ))}
      </dl>
      <div className="mt-auto mr-[40px] ml-[23px] flex flex-col gap-[12px]">
        {["Settings", "Close"].map((t) => (
          <button key={t} disabled className={`h-[33px] rounded-[7px] border-2 border-[#2e2426] text-[14px] font-bold text-[#8c8c8c] ${glossGray}`}>
            {t}
          </button>
        ))}
      </div>
    </aside>
  );
}

function StartOrb() {
  return (
    <svg width="38" height="38" viewBox="0 0 38 38" aria-hidden="true">
      <defs>
        <radialGradient id="orb" cx="0.5" cy="0.95" r="0.9">
          <stop offset="0" stopColor="#19e0ff" />
          <stop offset="0.4" stopColor="#1680b4" />
          <stop offset="0.8" stopColor="#1c4768" />
          <stop offset="1" stopColor="#7f9fb8" />
        </radialGradient>
      </defs>
      <circle cx="19" cy="19" r="17.500" fill="url(#orb)" stroke="#7fa6c9" strokeWidth="1.500" />
      <path d="M3 15Q6 3 19 2.500Q32 3 35 15Q19 20 3 15Z" fill="#dfeaf2" opacity="0.450" />
      <path d="M12 10Q15 8 19 10L17.500 17.500Q14 16 10 17.500Z" fill="#f0562a" />
      <path d="M20.500 10.500Q25 12.500 30 10L28 18Q23.500 20 19 18Z" fill="#8fc93e" />
      <path d="M9.500 19Q13 17.500 17 19L15.500 27Q12 25 7.500 26.500Z" fill="#2c9be0" />
      <path d="M18.500 19.500Q23 21.500 27.500 19.500L25.500 28Q21 30 16.800 28Z" fill="#fdc530" />
    </svg>
  );
}

function IEIcon() {
  return (
    <svg width="32" height="32" viewBox="0 0 32 32" aria-hidden="true">
      <path d="M27 20.500C25 26 21 29 16 29C9.500 29 5 24 5 17.500C5 11 9.500 6 16 6C23 6 27.500 11 27 18.500H11C11 21.500 13 24 16 24C18.500 24 20 23 21 20.500ZM11.300 14.500H21.200C20.800 12 19 10.500 16.300 10.500C13.600 10.500 11.800 12 11.300 14.500Z" fill="#62d2fa" />
      <path d="M28 11C31 3 27 0 17 6C6 12 -1 24 2 29C3.500 31.500 7 30 10 28C5 29 4 26 7 20C11 12 18 6 23 4C28 2 28.500 6 27 10Z" fill="#f6c51d" />
    </svg>
  );
}

function FolderIcon() {
  return (
    <svg width="34" height="32" viewBox="0 0 34 32" aria-hidden="true">
      <path d="M2 4Q2 2 4 2H11L13 5H30Q32 5 32 7V28H2Z" fill="#e9c766" />
      <path d="M6 3H12V7H6ZM14 5H19V9H14ZM21 7H28V10H21Z" fill="#fff" />
      <path d="M6 3H9V5H6Z" fill="#24b04a" />
      <path d="M14 5H17V7H14Z" fill="#e0412e" />
      <path d="M22 7H25V9H22Z" fill="#2a8be0" />
      <path d="M1 8H12L14 11H33V29H1Z" fill="#f8e39b" stroke="#dcb95a" strokeWidth="0.800" />
      <path d="M6 31V20Q6 18 8 18H26Q28 18 28 20V31H23V23H11V31Z" fill="#8fcbe8" stroke="#dff3fb" strokeWidth="0.800" />
    </svg>
  );
}

function PlayerIcon() {
  return (
    <svg width="28" height="26" viewBox="0 0 28 26" aria-hidden="true">
      <path d="M20 2H27V24H20Z" fill="#5d9dc9" />
      <path d="M22 2V24M25 3V23" stroke="#bfe0f2" />
      <path d="M1 1H21V25H1Z" fill="#8fc2e2" stroke="#c5e3f3" strokeWidth="0.800" />
      <circle cx="11.500" cy="13" r="9" fill="#f07818" />
      <path d="M8 7 18 13 8 19Z" fill="#fff" />
    </svg>
  );
}

function ChromeIcon() {
  return (
    <svg width="30" height="30" viewBox="0 0 30 30" aria-hidden="true">
      <circle cx="15" cy="15" r="14.500" fill="#fcc934" />
      <path d="M2.400 7.800A14.500 14.500 0 0 0 15 29.500L21 18.500 15 15 9 18.500Z" fill="#1ba05c" />
      <path d="M2.400 7.800 9 18.500 15 15V8H27.600A14.500 14.500 0 0 0 2.400 7.800Z" fill="#dd4b3e" />
      <circle cx="15" cy="15" r="7" fill="#fff" />
      <circle cx="15" cy="15" r="5.500" fill="#4486f4" />
    </svg>
  );
}

function Taskbar() {
  const pinned = "flex h-full items-center justify-center";
  const open = "flex h-[39px] w-[58px] items-center justify-center rounded-[3px] border border-[#a9b8d8] bg-[linear-gradient(135deg,#8b9cc6_0%,#5b74b0_35%,#2f4f98_55%,#3a5ba2_100%)]";
  return (
    <footer className="flex h-[40px] items-center border-t border-[#8ea5cc] bg-[linear-gradient(100deg,#1b3468_0%,#1d3a78_3%,#20418b_8%,#21428c_33%,#30529a_36%,#2c4e97_40%,#1f408a_44%,#22448d_52%,#2e5199_56%,#20418b_60%,#22478f_64%,#34579d_67%,#21468f_72%,#2456a0_80%,#3461a6_87%,#2b4a7e_90%,#2a4676_100%)] text-white">
      <button aria-label="Start menu" className={`${pinned} ml-[8px] w-[38px]`}><StartOrb /></button>
      <button aria-label="Internet Explorer" className={`${pinned} ml-[26px] w-[34px]`}><IEIcon /></button>
      <button aria-label="Windows Explorer" className={`${pinned} ml-[28px] w-[34px]`}><FolderIcon /></button>
      <button aria-label="Media Player" className={`${pinned} ml-[30px] w-[28px]`}><PlayerIcon /></button>
      <button aria-label="Chrome" className={`ml-[20px] ${open}`}><ChromeIcon /></button>
      <button aria-label="Illustrator" className={`ml-[4px] ${open}`}>
        <span className="mb-[4px] flex h-[26px] w-[28px] items-center justify-center border-2 border-[#f7a030] bg-[#2c1a08] font-['Open_Sans',sans-serif] text-[15px] font-bold text-[#f7a030]">Ai</span>
      </button>
      <div className="ml-auto flex h-full items-center">
        <button aria-label="Show hidden icons" className="mr-[44px]">
          <svg width="8" height="5" viewBox="0 0 8 5" aria-hidden="true"><path d="M0 5 4 0 8 5Z" fill="#fff" /></svg>
        </button>
        <button aria-label="Volume" className="mr-[62px]">
          <svg width="16" height="16" viewBox="0 0 16 16" aria-hidden="true">
            <path d="M0 5H3L7 1V15L3 11H0Z" fill="#fff" />
            <path d="M9 6Q10 8 9 10M11 4Q13.500 8 11 12M13 2Q17 8 13 14" fill="none" stroke="#fff" strokeWidth="1.100" />
          </svg>
        </button>
        <div className="mr-[7px] pb-[1px] text-center font-['Open_Sans',sans-serif] text-[11px] leading-[17px]">
          <div>12:58 PM</div>
          <div>10/25/2015</div>
        </div>
        <button aria-label="Show desktop" className="h-full w-[14px] border border-[#8ea5cc] bg-[linear-gradient(180deg,#5f78a8,#2a4a8a_50%,#2f5cab)]" />
      </div>
    </footer>
  );
}

export default function App() {
  return (
    <div className={`relative flex min-h-screen flex-col overflow-hidden bg-[#737172] text-black ${SANS}`}>
      <nav className="flex h-[40px] pl-[22px]">
        <MainTab label="Viewer" active icon={<EyeIcon />} className="w-[151px]" />
        <MainTab label="System" icon={<PulseIcon />} className="w-[157px]" />
        <MainTab label="Diagnostics" icon={<StethoscopeIcon />} className="w-[185px]" />
      </nav>
      <main className="mx-[10px] flex flex-1 flex-col overflow-hidden rounded-[12px] border-x border-[#444] bg-[#e2e2e2]">
        <header>
          <h1 className={`h-[31px] pl-[305px] text-[14px] ${titleBar}`}>Document, 50W CO2 (10.6µ)</h1>
          <div className="flex h-[41px] items-center justify-end bg-[#737172] pr-[21px] pb-[2px] text-[13px] font-bold text-white">
            <label htmlFor="copies" className="mr-[8px]">Copies:</label>
            <input id="copies" defaultValue="0" className="mr-[22px] h-[19px] w-[32px] bg-white text-center text-[#00f]" />
            <label htmlFor="runtime" className="mr-[7px]">Runtime:</label>
            <input id="runtime" readOnly defaultValue="0:00:00" className="h-[19px] w-[94px] bg-white text-center text-[#00f]" />
          </div>
        </header>
        <div className="flex flex-1">
          <Workspace />
          <ControlPanel />
        </div>
      </main>
      <div className="flex h-[41px] items-center pl-[24px] text-[13px] font-bold text-white">
        <span className="size-[18px] rounded-full bg-[radial-gradient(circle_at_35%_30%,#ddd,#8a8a8a_50%,#666)] shadow-[1px_2px_2px_#444]" />
        <span className="mr-[9px] ml-[6px] size-[18px] rounded-full bg-[radial-gradient(circle_at_35%_30%,#a8ffa8,#33ff33_50%,#22dd22)] shadow-[1px_2px_2px_#444]" />
        Door Open
      </div>
      <Taskbar />
      <LaserDialog />
    </div>
  );
}
